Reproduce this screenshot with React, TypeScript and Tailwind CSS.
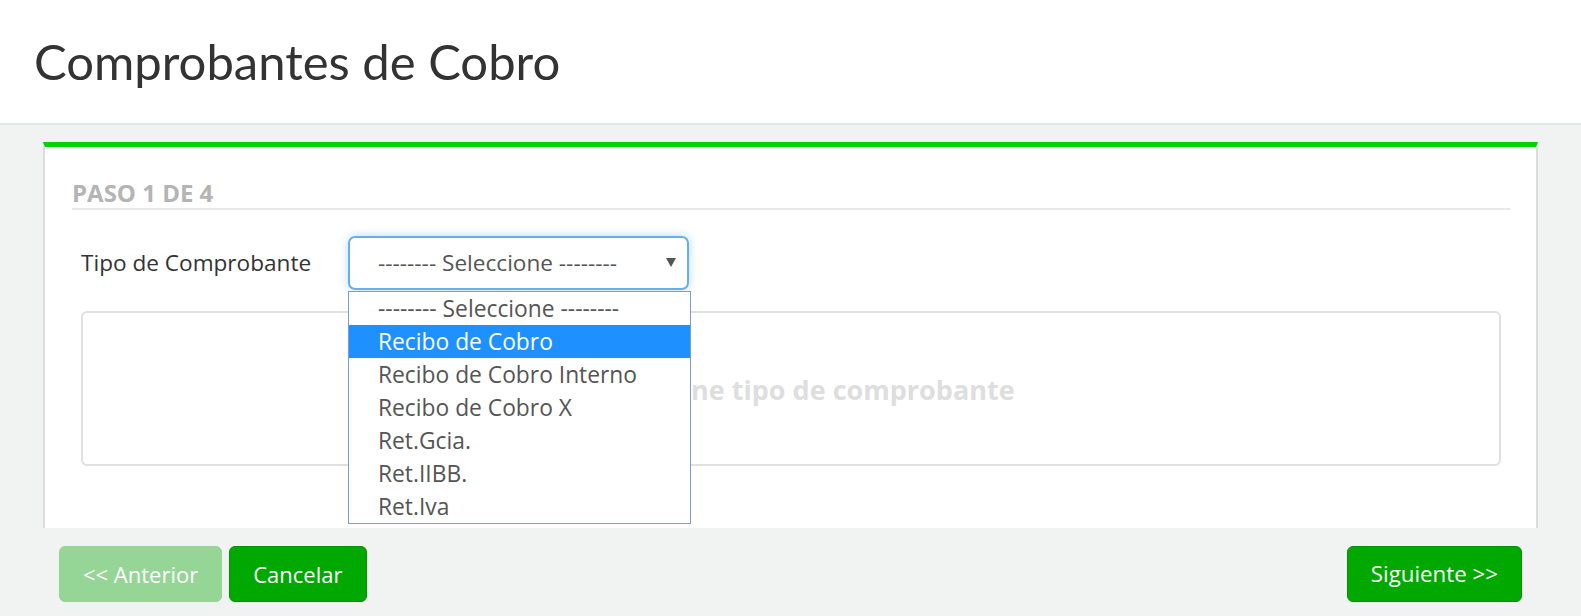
const opciones = [
  "-------- Seleccione --------",
  "Recibo de Cobro",
  "Recibo de Cobro Interno",
  "Recibo de Cobro X",
  "Ret.Gcia.",
  "Ret.IIBB.",
  "Ret.Iva",
];

export default function App() {
  return (
    <div className="min-h-screen bg-[#f1f2f2] font-['Open_Sans',sans-serif]">
      {/* Header */}
      <header className="h-[125px] bg-white border-b-2 border-[#e4e7ea] flex items-center pl-[34px]">
        <h1 className="font-['Lato',sans-serif] text-[49px] text-[#333]">
          Comprobantes de Cobro
        </h1>
      </header>

      {/* Card */}
      <div className="mx-[43px] mt-[17px] bg-white border-t-[5px] border-t-[#00d400] border-x-2 border-x-[#dcdcdc] pl-[27px] pr-[26px] pt-[33px] pb-[62px]">
        <h4 className="text-[24px] leading-[26px] font-bold text-[#b4b4b4] border-b-2 border-[#e6e8ea] pb-[2px]">
          PASO 1 DE 4
        </h4>

        <div className="px-[9px]">
          {/* Form row */}
          <div className="mt-[26px] flex items-center">
            <label className="w-[267px] text-[22.6px] text-[#333]">
              Tipo de Comprobante
            </label>
            <div className="relative">
              <div className="w-[341px] h-[54px] border-2 border-[#66afe9] rounded-[7px] shadow-[0_0_10px_rgba(102,175,233,0.45)] flex items-center pl-[28px] text-[22.6px] text-[#555]">
                -------- Seleccione --------
                <svg
                  className="absolute right-[13px] top-[22px]"
                  width="10"
                  height="9"
                  viewBox="0 0 10 9"
                >
                  <path d="M0 0 H10 L5 9 Z" fill="#555" />
                </svg>
              </div>

              {/* Open list */}
              <ul className="absolute left-0 top-[55px] w-[343px] bg-white border border-[#7a9cd3] z-10">
                {opciones.map((o, i) => (
                  <li
                    key={o}
                    className={
                      i === 1
                        ? "h-[33px] leading-[33px] pl-[29px] text-[22.8px] bg-[#1e90ff] text-white"
                        : "h-[33px] leading-[33px] pl-[29px] text-[22.8px] text-[#555]"
                    }
                  >
                    {o}
                  </li>
                ))}
              </ul>
            </div>
          </div>

          {/* Empty panel */}
          <div className="mt-[21px] h-[155px] border-2 border-[#e0e0e0] rounded-[6px] flex items-center justify-center pl-[16px] pt-[3px]">
            <span className="text-[27px] font-bold text-[#dedede]">
              Seleccione tipo de comprobante
            </span>
          </div>
        </div>
      </div>

      {/* Footer buttons */}
      <div className="px-[59px] pt-[18px] flex items-center">
        <button className="h-[56px] px-[23px] rounded-[6px] border border-[#95d595] bg-[#95d595] text-white text-[22px]">
          &lt;&lt; Anterior
        </button>
        <button className="ml-[7px] h-[56px] px-[23px] rounded-[6px] border border-[#009400] bg-[#00a800] text-white text-[22px]">
          Cancelar
        </button>
        <button className="ml-auto h-[56px] px-[23px] rounded-[6px] border border-[#009400] bg-[#00a800] text-white text-[22.3px]">
          Siguiente &gt;&gt;
        </button>
      </div>
    </div>
  );
}
